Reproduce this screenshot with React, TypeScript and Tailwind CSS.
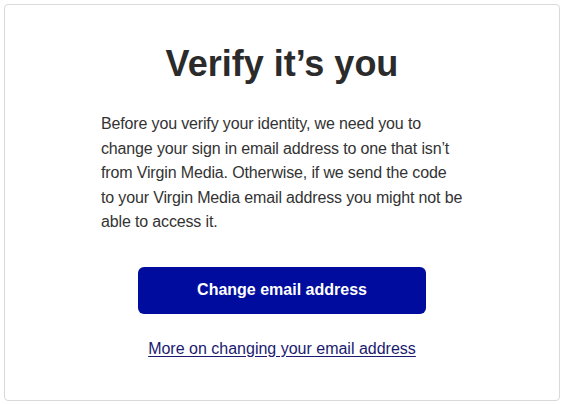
export default function App() {
  return (
    <div className="min-h-screen bg-white p-1" style={{ fontFamily: '"Liberation Sans", Arial, sans-serif' }}>
      <div className="flex h-[397px] flex-col items-center rounded-[4px] border border-[#d9d9d9] bg-white pt-[39px]">
        <h1 className="text-[36px] font-bold leading-[40px] text-[#2b2b2b]">Verify it’s you</h1>

        <p className="mt-[28px] w-[362px] text-[16px] leading-[24.5px] tracking-[-0.15px] text-[#333333] whitespace-nowrap">
          Before you verify your identity, we need you to
          <br />
          change your sign in email address to one that isn’t
          <br />
          from Virgin Media. Otherwise, if we send the code
          <br />
          to your Virgin Media email address you might not be
          <br />
          able to access it.
        </p>

        <button className="mt-[32px] h-[47px] w-[288px] rounded-[6px] bg-[#000c9d] text-[16px] font-bold text-white">
          Change email address
        </button>

        <a href="#" className="mt-[23px] text-[16px] leading-[24px] text-[#1a1a70] underline underline-offset-2">
          More on changing your email address
        </a>
      </div>
    </div>
  );
}
